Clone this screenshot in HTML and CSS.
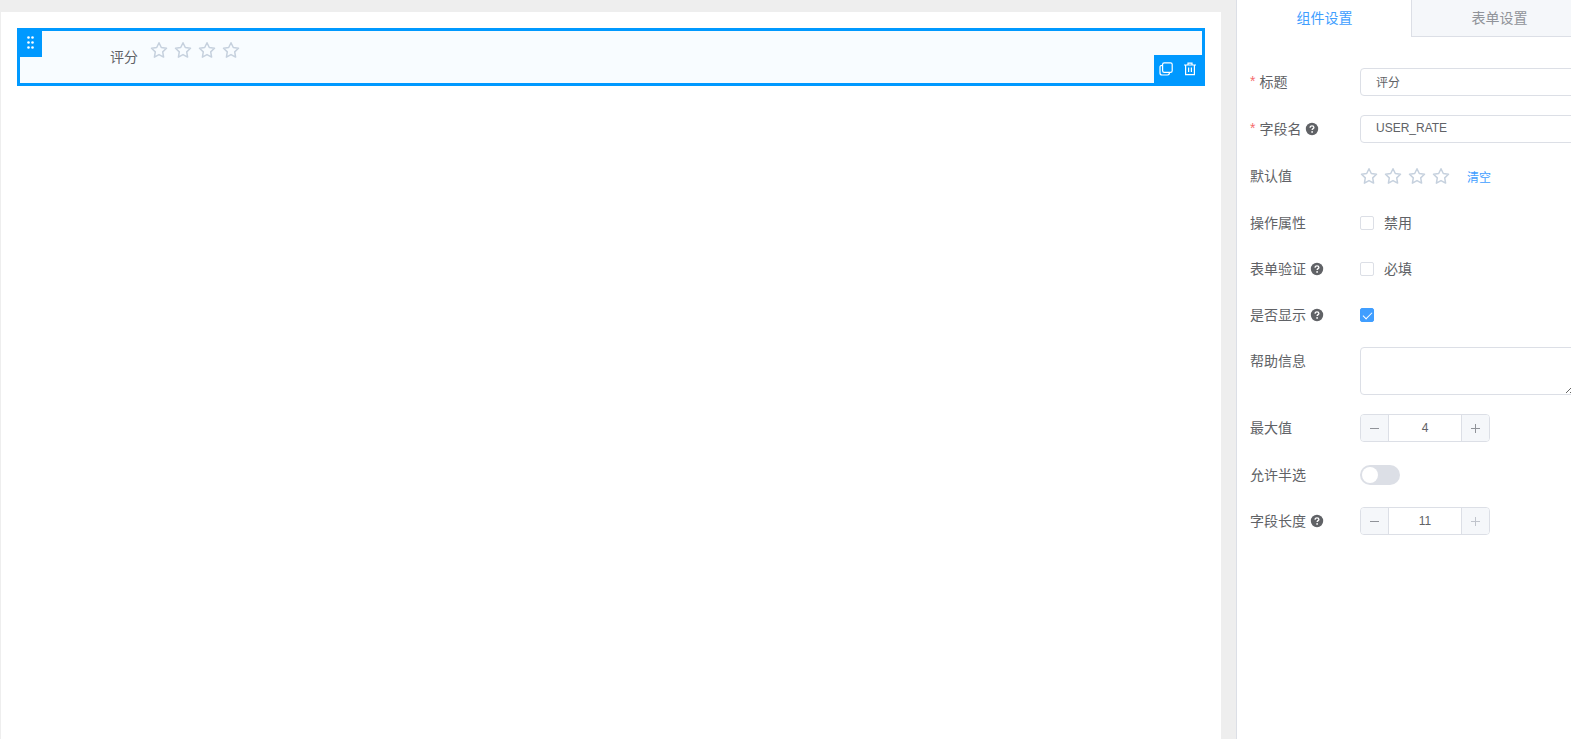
FILE: index.html
```html
<!DOCTYPE html>
<html lang="zh-CN">
<head>
    <meta charset="UTF-8">
    <title>表单设计</title>
    <link rel="stylesheet" href="styles.css">
</head>
<body>
    <!-- shared icons -->
    <svg class="icon-defs" aria-hidden="true">
        <symbol id="icon-star" viewBox="0 0 18 18">
            <path d="M9 1.700l2.300 4.800 5.200.8-3.800 3.600.9 5.200L9 13.600l-4.600 2.500.9-5.200L1.500 7.300l5.200-.8z" fill="none" stroke="#c6d1de" stroke-width="1.500" stroke-linejoin="round"/>
        </symbol>
        <symbol id="icon-help" viewBox="0 0 14 14">
            <circle cx="7" cy="7" r="6.200" fill="#606266"/>
            <path d="M5.100 5.700C5.100 4.400 6 3.800 7 3.800s1.900.6 1.900 1.600c0 1.200-1.800 1.300-1.800 2.600" fill="none" stroke="#fff" stroke-width="1.300"/>
            <circle cx="7.100" cy="9.900" r=".9" fill="#fff"/>
        </symbol>
    </svg>

    <div class="designer">
        <main class="canvas">
            <div class="widget active">
                <span class="widget-label">评分</span>
                <div class="rate">
                    <button type="button" aria-label="1 星"><svg><use href="#icon-star"/></svg></button>
                    <button type="button" aria-label="2 星"><svg><use href="#icon-star"/></svg></button>
                    <button type="button" aria-label="3 星"><svg><use href="#icon-star"/></svg></button>
                    <button type="button" aria-label="4 星"><svg><use href="#icon-star"/></svg></button>
                </div>
                <button type="button" class="widget-drag" aria-label="拖动">
                    <svg width="8" height="14" viewBox="0 0 8 14" fill="#fff">
                        <circle cx="1.500" cy="1.500" r="1.300"/><circle cx="5.500" cy="1.500" r="1.300"/>
                        <circle cx="1.500" cy="6.500" r="1.300"/><circle cx="5.500" cy="6.500" r="1.300"/>
                        <circle cx="1.500" cy="11.500" r="1.300"/><circle cx="5.500" cy="11.500" r="1.300"/>
                    </svg>
                </button>
                <div class="widget-actions">
                    <button type="button" aria-label="复制">
                        <svg width="14" height="14" viewBox="0 0 14 14" fill="none" stroke="#fff" stroke-width="1.200">
                            <rect x="3.600" y="0.800" width="9.600" height="9.600" rx="1.600"/>
                            <path d="M3.400 3.400C1.800 3.400 1 4 1 5v6c0 1.300.7 2 2 2h5.500c1.200 0 2-.8 2-2.400"/>
                        </svg>
                    </button>
                    <button type="button" aria-label="删除">
                        <svg width="14" height="14" viewBox="0 0 14 14" fill="none" stroke="#fff" stroke-width="1.200">
                            <path d="M1 3h12M5 2.800V1.200h4v1.600M2.600 3v9.600h8.800V3M5.600 5.500v4.500M8.400 5.500v4.500"/>
                        </svg>
                    </button>
                </div>
            </div>
        </main>

        <aside class="sidebar">
            <div class="tabs" role="tablist">
                <button type="button" role="tab" aria-selected="true" class="tab active">组件设置</button>
                <button type="button" role="tab" aria-selected="false" class="tab">表单设置</button>
            </div>

            <form class="settings">
                <div class="form-item tall">
                    <label class="form-label required" for="title">标题</label>
                    <input class="text-input" type="text" id="title" value="评分">
                </div>
                <div class="form-item tall">
                    <label class="form-label required" for="field">字段名 <svg class="help"><use href="#icon-help"/></svg></label>
                    <input class="text-input" type="text" id="field" value="USER_RATE">
                </div>
                <div class="form-item tall">
                    <span class="form-label">默认值</span>
                    <div class="form-content">
                        <div class="rate">
                            <button type="button" aria-label="1 星"><svg><use href="#icon-star"/></svg></button>
                            <button type="button" aria-label="2 星"><svg><use href="#icon-star"/></svg></button>
                            <button type="button" aria-label="3 星"><svg><use href="#icon-star"/></svg></button>
                            <button type="button" aria-label="4 星"><svg><use href="#icon-star"/></svg></button>
                        </div>
                        <button type="button" class="text-btn">清空</button>
                    </div>
                </div>
                <div class="form-item">
                    <span class="form-label">操作属性</span>
                    <label class="checkbox"><input type="checkbox">禁用</label>
                </div>
                <div class="form-item">
                    <span class="form-label">表单验证 <svg class="help"><use href="#icon-help"/></svg></span>
                    <label class="checkbox"><input type="checkbox">必填</label>
                </div>
                <div class="form-item">
                    <label class="form-label" for="visible">是否显示 <svg class="help"><use href="#icon-help"/></svg></label>
                    <div class="checkbox"><input type="checkbox" id="visible" checked></div>
                </div>
                <div class="form-item tall">
                    <label class="form-label" for="tip">帮助信息</label>
                    <textarea class="textarea" id="tip"></textarea>
                </div>
                <div class="form-item tall">
                    <label class="form-label" for="max">最大值</label>
                    <div class="input-number">
                        <button type="button" class="minus" aria-label="减少"></button>
                        <input type="text" id="max" value="4">
                        <button type="button" class="plus" aria-label="增加"></button>
                    </div>
                </div>
                <div class="form-item">
                    <label class="form-label" for="half">允许半选</label>
                    <div class="form-content"><input class="switch" type="checkbox" role="switch" id="half"></div>
                </div>
                <div class="form-item">
                    <label class="form-label" for="length">字段长度 <svg class="help"><use href="#icon-help"/></svg></label>
                    <div class="input-number">
                        <button type="button" class="minus" aria-label="减少"></button>
                        <input type="text" id="length" value="11">
                        <button type="button" class="plus" aria-label="增加" disabled></button>
                    </div>
                </div>
            </form>
        </aside>
    </div>
</body>
</html>
```

FILE: styles.css
```css
* {
    box-sizing: border-box;
}
body {
    margin: 0;
    font-family: "Liberation Sans", "Noto Sans CJK SC", sans-serif;
    font-size: 14px;
    color: #606266;
    background: #eee;
    overflow: hidden;
}
button, input, textarea {
    font-family: inherit;
    color: inherit;
    margin: 0;
}
button {
    border: none;
    padding: 0;
    background: none;
    cursor: pointer;
}
.icon-defs {
    display: none;
}

/* layout, the sidebar runs a little past the right edge */
.designer {
    display: flex;
    min-height: 100vh;
    margin-right: -16px;
}
.canvas {
    flex: 1;
    margin: 12px 15px 0 1px;
    padding: 16px;
    background: #fff;
}
.sidebar {
    flex: none;
    width: 351px;
    border-left: 1px solid #dcdfe6;
    background: #fff;
}

/* widget */
.widget {
    position: relative;
    display: flex;
    height: 58px;
    border: 3px solid #fff;
}
.widget.active {
    border-color: #09f;
    background: #f8fcff;
}
.widget-label {
    width: 130px;
    padding-right: 12px;
    line-height: 52px;
    text-align: right;
}
.widget .rate {
    height: 38px;
}
.widget-drag {
    position: absolute;
    top: 0;
    left: 0;
    display: flex;
    width: 22px;
    height: 26px;
    padding: 5px 0 0 7px;
    background: #09f;
}
.widget-actions {
    position: absolute;
    right: 0;
    bottom: 0;
    display: flex;
    align-items: center;
    gap: 10px;
    height: 28px;
    padding: 0 5px;
    background: #09f;
}
.widget-actions svg {
    display: block;
}

.rate {
    display: flex;
    align-items: center;
    gap: 6px;
}
.rate svg {
    display: block;
    width: 18px;
    height: 18px;
}

/* tabs */
.tabs {
    display: flex;
    height: 37px;
}
.tab {
    flex: 1;
    padding-bottom: 2px;
    font-size: 14px;
    color: #909399;
    background: #f5f7fa;
    border-left: 1px solid #dcdfe6;
    border-bottom: 1px solid #dcdfe6;
}
.tab.active {
    flex: none;
    width: 174px;
    color: #409eff;
    background: #fff;
    border-color: #fff;
}

/* settings form */
.settings {
    padding: 31px 12px 0 13px;
}
.form-item {
    display: flex;
    min-height: 28px;
    margin-bottom: 18px;
}
.form-item.tall {
    padding-bottom: 1px;
}
.form-label {
    display: flex;
    align-items: center;
    gap: 4px;
    flex: none;
    width: 110px;
    height: 25px;
}
.form-label.required::before {
    content: "*";
    color: #f56c6c;
}
.help {
    width: 14px;
    height: 14px;
    margin-top: 2px;
}
.form-content {
    display: flex;
    align-items: center;
    height: 28px;
}
.text-input, .textarea {
    flex: 1;
    min-width: 0;
    border: 1px solid #dcdfe6;
    border-radius: 4px;
    background: #fff;
}
.text-input {
    height: 28px;
    padding: 0 15px 2px;
    font-size: 12px;
}
.textarea {
    height: 48px;
    padding: 5px 15px;
    resize: vertical;
}
.text-btn {
    margin-left: 17px;
    font-size: 12px;
    color: #409eff;
}

.checkbox {
    display: flex;
    align-items: center;
    gap: 10px;
    height: 28px;
    line-height: 14px;
}
.checkbox input {
    appearance: none;
    width: 14px;
    height: 14px;
    border: 1px solid #dcdfe6;
    border-radius: 2px;
    background: #fff;
}
.checkbox input:checked {
    display: flex;
    justify-content: center;
    border-color: #409eff;
    background: #409eff;
}
.checkbox input:checked::after {
    content: "";
    width: 4px;
    height: 8px;
    margin-top: 1px;
    border: solid #fff;
    border-width: 0 1px 1px 0;
    transform: rotate(45deg);
}

.input-number {
    display: flex;
    width: 130px;
    height: 28px;
    border: 1px solid #dcdfe6;
    border-radius: 4px;
    overflow: hidden;
}
.input-number input {
    flex: 1;
    min-width: 0;
    padding: 0;
    border: solid #dcdfe6;
    border-width: 0 1px;
    font-size: 12px;
    text-align: center;
}
.input-number button {
    width: 27px;
    color: #909399;
    background: linear-gradient(currentColor, currentColor) center / 9px 1px no-repeat, #f5f7fa;
}
.input-number .plus {
    background: linear-gradient(currentColor, currentColor) center / 9px 1px no-repeat,
        linear-gradient(currentColor, currentColor) center / 1px 9px no-repeat, #f5f7fa;
}
.input-number button:disabled {
    color: #c0c4cc;
}

.switch {
    appearance: none;
    display: flex;
    width: 40px;
    height: 20px;
    padding: 2px;
    border-radius: 10px;
    background: #dcdfe6;
}
.switch::before {
    content: "";
    width: 16px;
    height: 16px;
    border-radius: 50%;
    background: #fff;
}
```
